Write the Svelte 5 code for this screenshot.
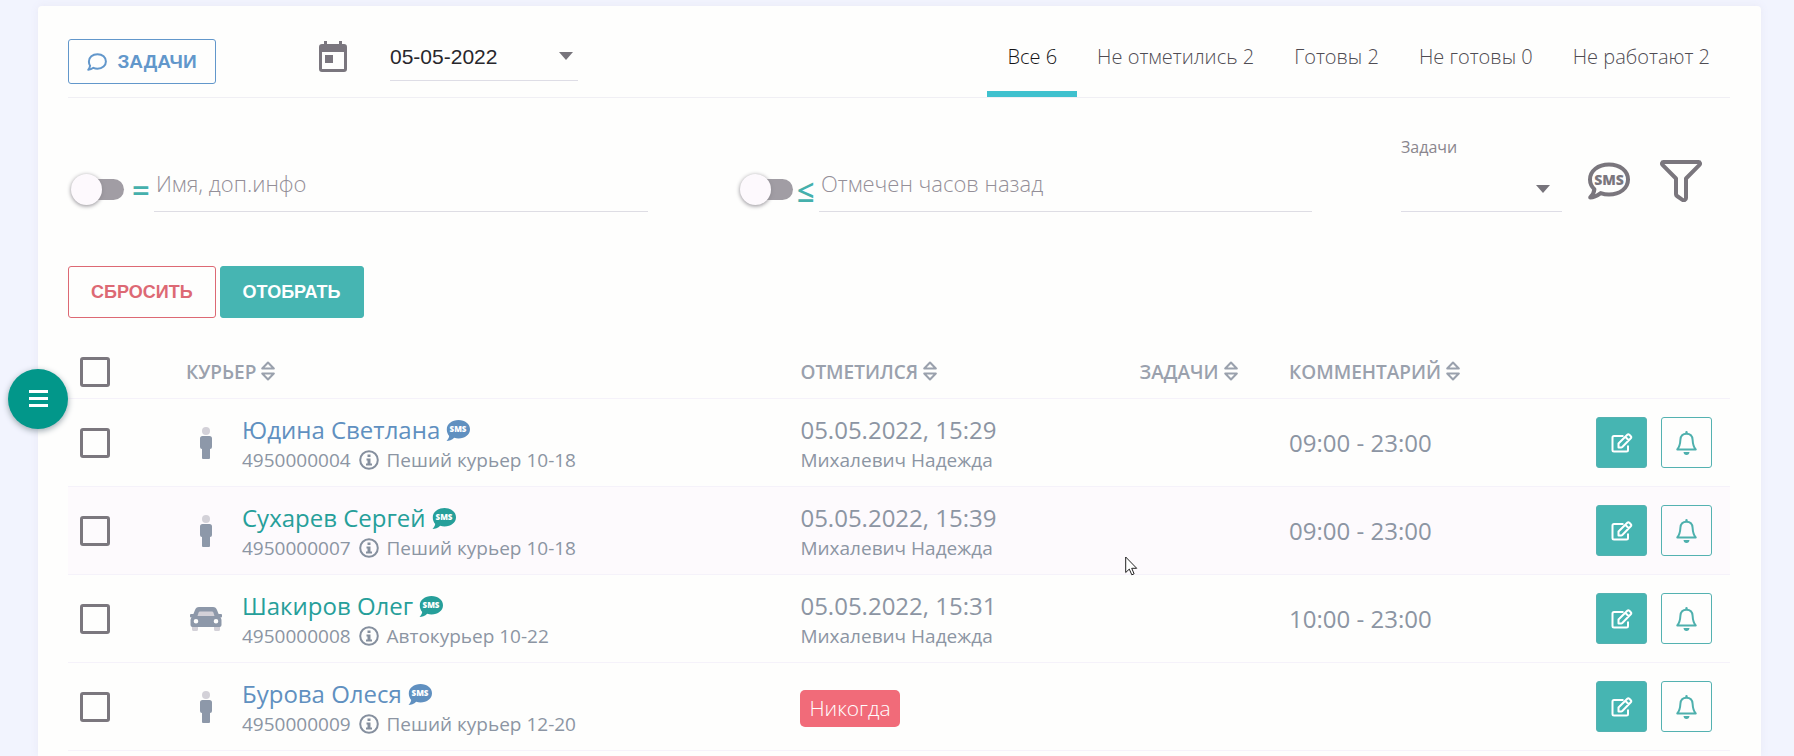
<script>
    const tabs = [
        { id: "all", title: "Все", count: 6 },
        { id: "unmarked", title: "Не отметились", count: 2 },
        { id: "ready", title: "Готовы", count: 2 },
        { id: "notready", title: "Не готовы", count: 0 },
        { id: "off", title: "Не работают", count: 2 },
    ];

    const couriers = [
        { name: "Юдина Светлана", phone: "4950000004", info: "Пеший курьер 10-18", type: "walk", color: "blue", marked: "05.05.2022, 15:29", by: "Михалевич Надежда", comment: "09:00 - 23:00" },
        { name: "Сухарев Сергей", phone: "4950000007", info: "Пеший курьер 10-18", type: "walk", color: "green", marked: "05.05.2022, 15:39", by: "Михалевич Надежда", comment: "09:00 - 23:00", active: true },
        { name: "Шакиров Олег", phone: "4950000008", info: "Автокурьер 10-22", type: "car", color: "green", marked: "05.05.2022, 15:31", by: "Михалевич Надежда", comment: "10:00 - 23:00" },
        { name: "Бурова Олеся", phone: "4950000009", info: "Пеший курьер 12-20", type: "walk", color: "blue", marked: null, by: "", comment: "" },
    ];

    let activeTab = "all";
    let date = "05-05-2022";
    let task = "";
    let name = "";
    let hours = "";
    let exactName = false;
    let lessHours = false;

    function reset() {
        name = "";
        hours = "";
        task = "";
        exactName = false;
        lessHours = false;
    }
</script>

{#snippet sortIcon()}
    <svg class="sort" viewBox="0 0 14 20" aria-hidden="true">
        <path d="M7 1.500 12.800 7.500H1.200zM7 18.500 12.800 12.500H1.200z" />
    </svg>
{/snippet}

<div class="page">
    <main class="card">
        <header class="top">
            <button class="btn tasks" type="button">
                <svg viewBox="0 0 20 18" aria-hidden="true">
                    <path d="M10.500 1.200c5 0 8.400 3.200 8.400 7.200s-3.400 7.300-8.400 7.300c-1.500 0-2.900-.3-4.100-.9C5 15.900 3 16.700 1.200 16.800c1-1.100 1.700-2.500 1.900-4.100C2.300 11.500 1.900 10 1.900 8.400c0-4 3.600-7.200 8.600-7.200z" />
                </svg>
                ЗАДАЧИ
            </button>
            <svg class="calendar" viewBox="0 0 28 31" aria-hidden="true">
                <path fill-rule="evenodd" d="M5 0h3v3h12V0h3v3h2a3 3 0 0 1 3 3v22a3 3 0 0 1-3 3H3a3 3 0 0 1-3-3V6a3 3 0 0 1 3-3h2zM3 11v17h22V11z" />
                <path d="M6 14h8v8H6z" />
            </svg>
            <div class="select date">
                <select bind:value={date} aria-label="Дата">
                    <option>05-05-2022</option>
                </select>
                <svg viewBox="0 0 14 8" aria-hidden="true"><path d="M0 0h14L7 8z" /></svg>
            </div>
            <nav class="tabs">
                {#each tabs as tab}
                    <button type="button" class:active={activeTab === tab.id} on:click={() => (activeTab = tab.id)}>
                        {tab.title} {tab.count}
                    </button>
                {/each}
            </nav>
        </header>

        <section class="filters">
            <div class="field">
                <input class="switch" type="checkbox" bind:checked={exactName} aria-label="Точное совпадение" />
                <span class="sign">=</span>
                <input class="text" type="text" placeholder="Имя, доп.инфо" aria-label="Имя, доп.инфо" bind:value={name} />
            </div>
            <div class="field hours">
                <input class="switch" type="checkbox" bind:checked={lessHours} aria-label="Не более" />
                <span class="sign">≤</span>
                <input class="text" type="text" placeholder="Отмечен часов назад" aria-label="Отмечен часов назад" bind:value={hours} />
            </div>
            <div class="task-filter">
                <label for="task">Задачи</label>
                <div class="select">
                    <select id="task" bind:value={task}>
                        <option value=""></option>
                    </select>
                    <svg viewBox="0 0 14 8" aria-hidden="true"><path d="M0 0h14L7 8z" /></svg>
                </div>
            </div>
            <div class="tools">
                <button type="button" aria-label="SMS">
                    <svg viewBox="0 0 42 42" aria-hidden="true">
                        <path class="line" d="M21 4.500c11 0 19 6.300 19 15s-8 15-19 15c-3 0-5.800-.5-8.300-1.400C9.500 35.500 6 37.500 2.200 37.500c2.300-2.400 3.900-5 4.200-8.300C3.600 26.600 2 23.200 2 19.500c0-8.700 8-15 19-15z" />
                        <text x="21" y="25" font-size="14">SMS</text>
                    </svg>
                </button>
                <button type="button" aria-label="Фильтр">
                    <svg viewBox="0 0 42 42" aria-hidden="true">
                        <path class="line" d="M3.500 2h35c1.500 0 2 1.800 1 2.800L26 18.500V38c0 2-2 2.800-3.500 1.800L17 36c-.7-.5-1-1-1-1.800V18.500L2.500 4.800c-1-1-.5-2.800 1-2.800z" />
                    </svg>
                </button>
            </div>
        </section>

        <div class="actions">
            <button class="btn reset" type="button" on:click={reset}>СБРОСИТЬ</button>
            <button class="btn apply" type="button">ОТОБРАТЬ</button>
        </div>

        <table>
            <colgroup>
                <col class="c-check" />
                <col class="c-type" />
                <col class="c-name" />
                <col class="c-marked" />
                <col class="c-tasks" />
                <col class="c-comment" />
                <col class="c-buttons" />
            </colgroup>
            <thead>
                <tr>
                    <th><input class="check" type="checkbox" aria-label="Выбрать всех" /></th>
                    <th colspan="2">КУРЬЕР {@render sortIcon()}</th>
                    <th>ОТМЕТИЛСЯ {@render sortIcon()}</th>
                    <th>ЗАДАЧИ {@render sortIcon()}</th>
                    <th>КОММЕНТАРИЙ {@render sortIcon()}</th>
                    <th></th>
                </tr>
            </thead>
            <tbody>
                {#each couriers as courier}
                    <tr class:hovered={courier.active}>
                        <td><input class="check" type="checkbox" aria-label={courier.name} /></td>
                        <td class="type">
                            {#if courier.type === "car"}
                                <svg class="car" viewBox="0 0 32 24" aria-hidden="true">
                                    <path class="pale" d="M2 18h6v4.500Q8 24 6.500 24h-3Q2 24 2 22.500zM24 18h6v4.500q0 1.500-1.500 1.500h-3Q24 24 24 22.500zM8 3h16l2 7H6z" />
                                    <path fill-rule="evenodd" d="M9 0h14c2.200 0 3.200 1 4 3l1.600 4H31q1 0 1 1v1.500q0 1-1 1h-.7c.8.800 1.200 1.700 1.200 3V18q0 2-2 2h-27q-2 0-2-2v-4.500c0-1.300.4-2.200 1.200-3H1q-1 0-1-1V8q0-1 1-1h2.400L5 3C5.800 1 6.800 0 9 0zm1 4.500Q9 4.500 8.600 5.500L7.500 9h17l-1.100-3.500Q23 4.500 22 4.500zM6 12a2.300 2.300 0 1 0 0 4.600A2.300 2.300 0 0 0 6 12zm20 0a2.300 2.300 0 1 0 0 4.600 2.300 2.300 0 0 0 0-4.600z" />
                                </svg>
                            {:else}
                                <svg class="walk" viewBox="0 0 12 32" aria-hidden="true">
                                    <circle class="pale" cx="6" cy="4" r="4" />
                                    <path d="M2.500 9h7Q12 9 12 11.500V20q0 2-2 2v9q0 1-1 1H3q-1 0-1-1v-9q-2 0-2-2v-8.500Q0 9 2.500 9z" />
                                </svg>
                            {/if}
                        </td>
                        <td class="lines">
                            <div class="name {courier.color}">
                                <a href="#courier">{courier.name}</a>
                                <svg viewBox="0 0 24 21" role="img" aria-label="Отправить SMS">
                                    <path d="M12.500 0C19 0 24 4 24 9.200s-5 9.200-11.500 9.200c-1.500 0-3-.2-4.300-.7C6 19.800 3 21 .5 21c1.500-1.500 2.500-3.200 2.700-5C1.500 14 .8 11.800.8 9.200.8 4 6 0 12.500 0z" />
                                    <text x="12" y="12" font-size="8">SMS</text>
                                </svg>
                            </div>
                            <div class="info">
                                {courier.phone}
                                <svg viewBox="0 0 20 20" aria-hidden="true">
                                    <circle cx="10" cy="10" r="8.800" />
                                    <path d="M8.500 4.500h3v2.500h-3zM7.500 8.500h4v5H13v2H7v-2h1.500v-3h-1z" />
                                </svg>
                                {courier.info}
                            </div>
                        </td>
                        <td class="lines">
                            {#if courier.marked}
                                <div class="time">{courier.marked}</div>
                                <div class="info">{courier.by}</div>
                            {:else}
                                <span class="badge">Никогда</span>
                            {/if}
                        </td>
                        <td></td>
                        <td class="time">{courier.comment}</td>
                        <td>
                            <div class="row-buttons">
                                <button class="edit" type="button" aria-label="Изменить">
                                    <svg viewBox="0 0 22 20" aria-hidden="true">
                                        <path d="M12.500 3H3Q1.500 3 1.500 4.500V17q0 1.500 1.500 1.500h12.500q1.500 0 1.500-1.500v-4.500" />
                                        <path d="M7.500 14.500v-4L16.300 1.700q1-1 2 0l1.500 1.500q1 1 0 2L11.300 14q-.5.5-1.200.5zM14.500 4l3.200 3.200" />
                                    </svg>
                                </button>
                                <button class="bell" type="button" aria-label="Уведомить">
                                    <svg viewBox="0 0 21 24" aria-hidden="true">
                                        <path class="line" d="M10.500 2.800c3.800 0 5.900 2.700 6.100 6 .2 4.200.8 7 3.100 9.700H1.300c2.300-2.700 2.900-5.500 3.100-9.700.2-3.300 2.300-6 6.100-6z" />
                                        <path d="M9.300 3V1.200q0-1.200 1.200-1.200t1.200 1.200V3zM7.500 21h6q-.3 3-3 3t-3-3z" />
                                    </svg>
                                </button>
                            </div>
                        </td>
                    </tr>
                {/each}
            </tbody>
        </table>
    </main>

    <button class="menu" type="button" aria-label="Меню">
        <svg viewBox="0 0 19 17" aria-hidden="true"><path d="M0 0h19v3H0zM0 7h19v3H0zM0 14h19v3H0z" /></svg>
    </button>

    <svg class="pointer" viewBox="0 0 13 20" aria-hidden="true">
        <path d="M.7 1v15.500l3.600-3.400 2.500 5.700 2.300-1-2.400-5.500h5z" />
    </svg>
</div>

<style>
    :global(body) {
        margin: 0;
        background: #f2f4fe;
    }
    * {
        box-sizing: border-box;
    }
    .page {
        position: relative;
        display: flex;
        min-height: 100vh;
        padding: 6px 33px 0 38px;
        color: #8c95a3;
        font-family: "Open Sans", "Noto Sans", sans-serif;
        font-size: 20px;
    }
    .card {
        flex: 1;
        min-width: 0;
        padding: 0 31px 0 30px;
        background: #fefefd;
        border-radius: 4px 4px 0 0;
        box-shadow: 0 0 8px #e8e8f6;
    }
    button {
        padding: 0;
        border: 0;
        background: none;
        font: inherit;
        cursor: pointer;
    }
    .btn {
        border: 1px solid;
        border-radius: 3px;
        font-family: "Liberation Sans", Arial, sans-serif;
        font-weight: bold;
    }

    .top {
        display: flex;
        align-items: flex-start;
        height: 92px;
        border-bottom: 1px solid #f0eff4;
    }
    .tasks {
        display: flex;
        align-items: center;
        justify-content: center;
        gap: 10px;
        width: 148px;
        height: 45px;
        margin-top: 33px;
        color: #6297cb;
        font-size: 19px;
    }
    .tasks svg {
        width: 20px;
        height: 18px;
        fill: none;
        stroke: currentColor;
        stroke-width: 2;
        stroke-linejoin: round;
    }
    .calendar {
        width: 28px;
        height: 31px;
        margin: 35px 43px 0 103px;
        fill: #7a767e;
    }
    .select {
        position: relative;
        border-bottom: 1px solid #dedde6;
    }
    .select select {
        width: 100%;
        height: 100%;
        padding: 0;
        border: 0;
        outline: 0;
        background: none;
        appearance: none;
        color: #28272c;
        font-family: "Liberation Sans", Arial, sans-serif;
        font-size: 21px;
    }
    .select svg {
        position: absolute;
        right: 5px;
        bottom: 20px;
        width: 14px;
        height: 8px;
        fill: #77747b;
        pointer-events: none;
    }
    .date {
        width: 188px;
        height: 49px;
        margin-top: 26px;
    }
    .tabs {
        display: flex;
        margin-left: auto;
    }
    .tabs button {
        height: 91px;
        padding: 16px 20px 0;
        border-bottom: 6px solid transparent;
        color: #4f4c53;
        font-weight: 300;
    }
    .tabs .active {
        border-color: #3fc1ce;
        color: #141316;
    }

    .filters {
        display: flex;
        align-items: flex-end;
        height: 114px;
    }
    .field {
        display: flex;
        align-items: flex-end;
        flex: 580 1 0;
        margin-right: 89px;
    }
    .hours {
        flex-grow: 575;
    }
    .switch {
        position: relative;
        flex: none;
        width: 53px;
        height: 32px;
        margin: 0 8px 6px 3px;
        appearance: none;
        cursor: pointer;
    }
    .hours .switch {
        margin-right: 4px;
    }
    .switch::before {
        content: "";
        position: absolute;
        inset: 5px 0 6px 4px;
        border-radius: 11px;
        background: #a19da4;
    }
    .switch::after {
        content: "";
        position: absolute;
        left: 0;
        top: 0;
        width: 31px;
        height: 31px;
        border-radius: 50%;
        background: #fdf9fd;
        box-shadow: 0 1px 4px #8d8a90;
    }
    .switch:checked::after {
        left: 22px;
    }
    .sign {
        width: 22px;
        color: #45b0ac;
        font-size: 31px;
        font-weight: 600;
        line-height: 44px;
    }
    .text {
        flex: 1;
        min-width: 0;
        height: 56px;
        padding: 0 2px 1px;
        border: 0;
        border-bottom: 1px solid #dedde4;
        outline: 0;
        background: none;
        color: #28272c;
        font: inherit;
        font-size: 22px;
        font-weight: 300;
    }
    .text::placeholder {
        color: #948f98;
        opacity: 1;
    }
    .task-filter {
        flex: 161 1 0;
        font-size: 16px;
    }
    .task-filter label {
        display: block;
        margin-bottom: 6px;
        color: #8a868e;
        line-height: 22px;
    }
    .task-filter .select {
        height: 48px;
    }
    .select select#task {
        display: block;
    }
    .task-filter .select svg {
        right: 12px;
        bottom: 18px;
    }
    .tools {
        display: flex;
        gap: 30px;
        margin: 0 28px 10px 26px;
    }
    .tools svg {
        display: block;
        width: 42px;
        height: 42px;
        fill: #7a767d;
    }
    .tools .line {
        fill: none;
        stroke: #7a767d;
        stroke-width: 4;
        stroke-linejoin: round;
    }
    svg text {
        font-family: "Open Sans", sans-serif;
        font-weight: 800;
        text-anchor: middle;
    }

    .actions {
        display: flex;
        gap: 4px;
        margin: 54px 0 20px;
    }
    .actions .btn {
        height: 52px;
        padding: 0 22px;
        font-size: 18px;
    }
    .reset {
        color: #dd6974;
    }
    .apply {
        border-color: #46b5b2;
        background: #46b5b2;
        color: #fff;
    }

    table {
        width: 100%;
        table-layout: fixed;
        border-collapse: separate;
        border-spacing: 0;
    }
    .c-check {
        width: 106px;
    }
    .c-type {
        width: 56px;
    }
    .c-name {
        width: 33.6%;
    }
    .c-marked {
        width: 20.4%;
    }
    .c-tasks {
        width: 9%;
    }
    .c-buttons {
        width: 146px;
    }
    th,
    td {
        padding: 0 0 0 12px;
        border-bottom: 1px solid #f5f2fa;
        text-align: left;
        white-space: nowrap;
    }
    th {
        height: 61px;
        padding-top: 8px;
        color: #9aa1ad;
        font-size: 19px;
        font-weight: 600;
    }
    td {
        height: 88px;
    }
    .lines {
        padding-top: 4px;
    }
    .hovered {
        background: #fdfafd;
    }
    .sort {
        width: 14px;
        height: 20px;
        vertical-align: -2px;
        fill: none;
        stroke: currentColor;
        stroke-width: 2;
        stroke-linejoin: round;
    }
    .check {
        display: block;
        width: 30px;
        height: 30px;
        margin: 0;
        border: 3px solid #7b777e;
        border-radius: 3px;
        appearance: none;
        cursor: pointer;
    }
    .check:checked {
        background: #46b5b2;
    }
    .type {
        padding: 0 4px 0 12px;
    }
    .type svg {
        display: block;
        margin: 0 auto;
        fill: #8d98a9;
    }
    .type .pale {
        fill: #d3d1d8;
    }
    .walk {
        width: 12px;
        height: 32px;
    }
    .car {
        width: 32px;
        height: 24px;
    }
    .name,
    .time {
        font-size: 24px;
        line-height: 30px;
    }
    .name svg {
        width: 24px;
        height: 21px;
        vertical-align: -2px;
        fill: currentColor;
    }
    .name text {
        fill: #fff;
    }
    .name a {
        color: inherit;
        text-decoration: none;
    }
    .blue {
        color: #6090c0;
    }
    .green {
        color: #269f9a;
    }
    .info {
        font-size: 19px;
        line-height: 30px;
    }
    .info svg {
        width: 20px;
        height: 20px;
        margin: 0 3px;
        vertical-align: -3px;
        fill: #858f9e;
    }
    .info circle {
        fill: none;
        stroke: #858f9e;
        stroke-width: 2;
    }
    .badge {
        display: inline-block;
        padding: 0 9px;
        border-radius: 5px;
        background: #f16b79;
        color: #fff;
        font-size: 21px;
        font-weight: 300;
        line-height: 37px;
        vertical-align: middle;
    }
    .row-buttons {
        display: flex;
        gap: 14px;
    }
    .row-buttons button {
        display: flex;
        align-items: center;
        justify-content: center;
        width: 51px;
        height: 51px;
        border: 1px solid #54b2b1;
        border-radius: 3px;
    }
    .row-buttons .edit {
        background: #46b5b2;
    }
    .edit svg {
        width: 22px;
        height: 20px;
        fill: none;
        stroke: #fff;
        stroke-width: 2;
        stroke-linejoin: round;
    }
    .bell svg {
        width: 21px;
        height: 24px;
        fill: #4eb0ad;
    }
    .bell .line {
        fill: none;
        stroke: #4eb0ad;
        stroke-width: 2;
        stroke-linejoin: round;
    }

    .menu {
        position: fixed;
        left: 8px;
        top: calc(50vh - 9px);
        width: 60px;
        height: 60px;
        border-radius: 50%;
        background: #02978a;
        box-shadow: 0 2px 6px #9aa5ad;
    }
    .menu svg {
        width: 19px;
        height: 17px;
        fill: #fff;
    }
    .pointer {
        position: absolute;
        left: 1125px;
        top: 556px;
        width: 13px;
        height: 20px;
        fill: #fff;
        stroke: #222;
        pointer-events: none;
    }
</style>
